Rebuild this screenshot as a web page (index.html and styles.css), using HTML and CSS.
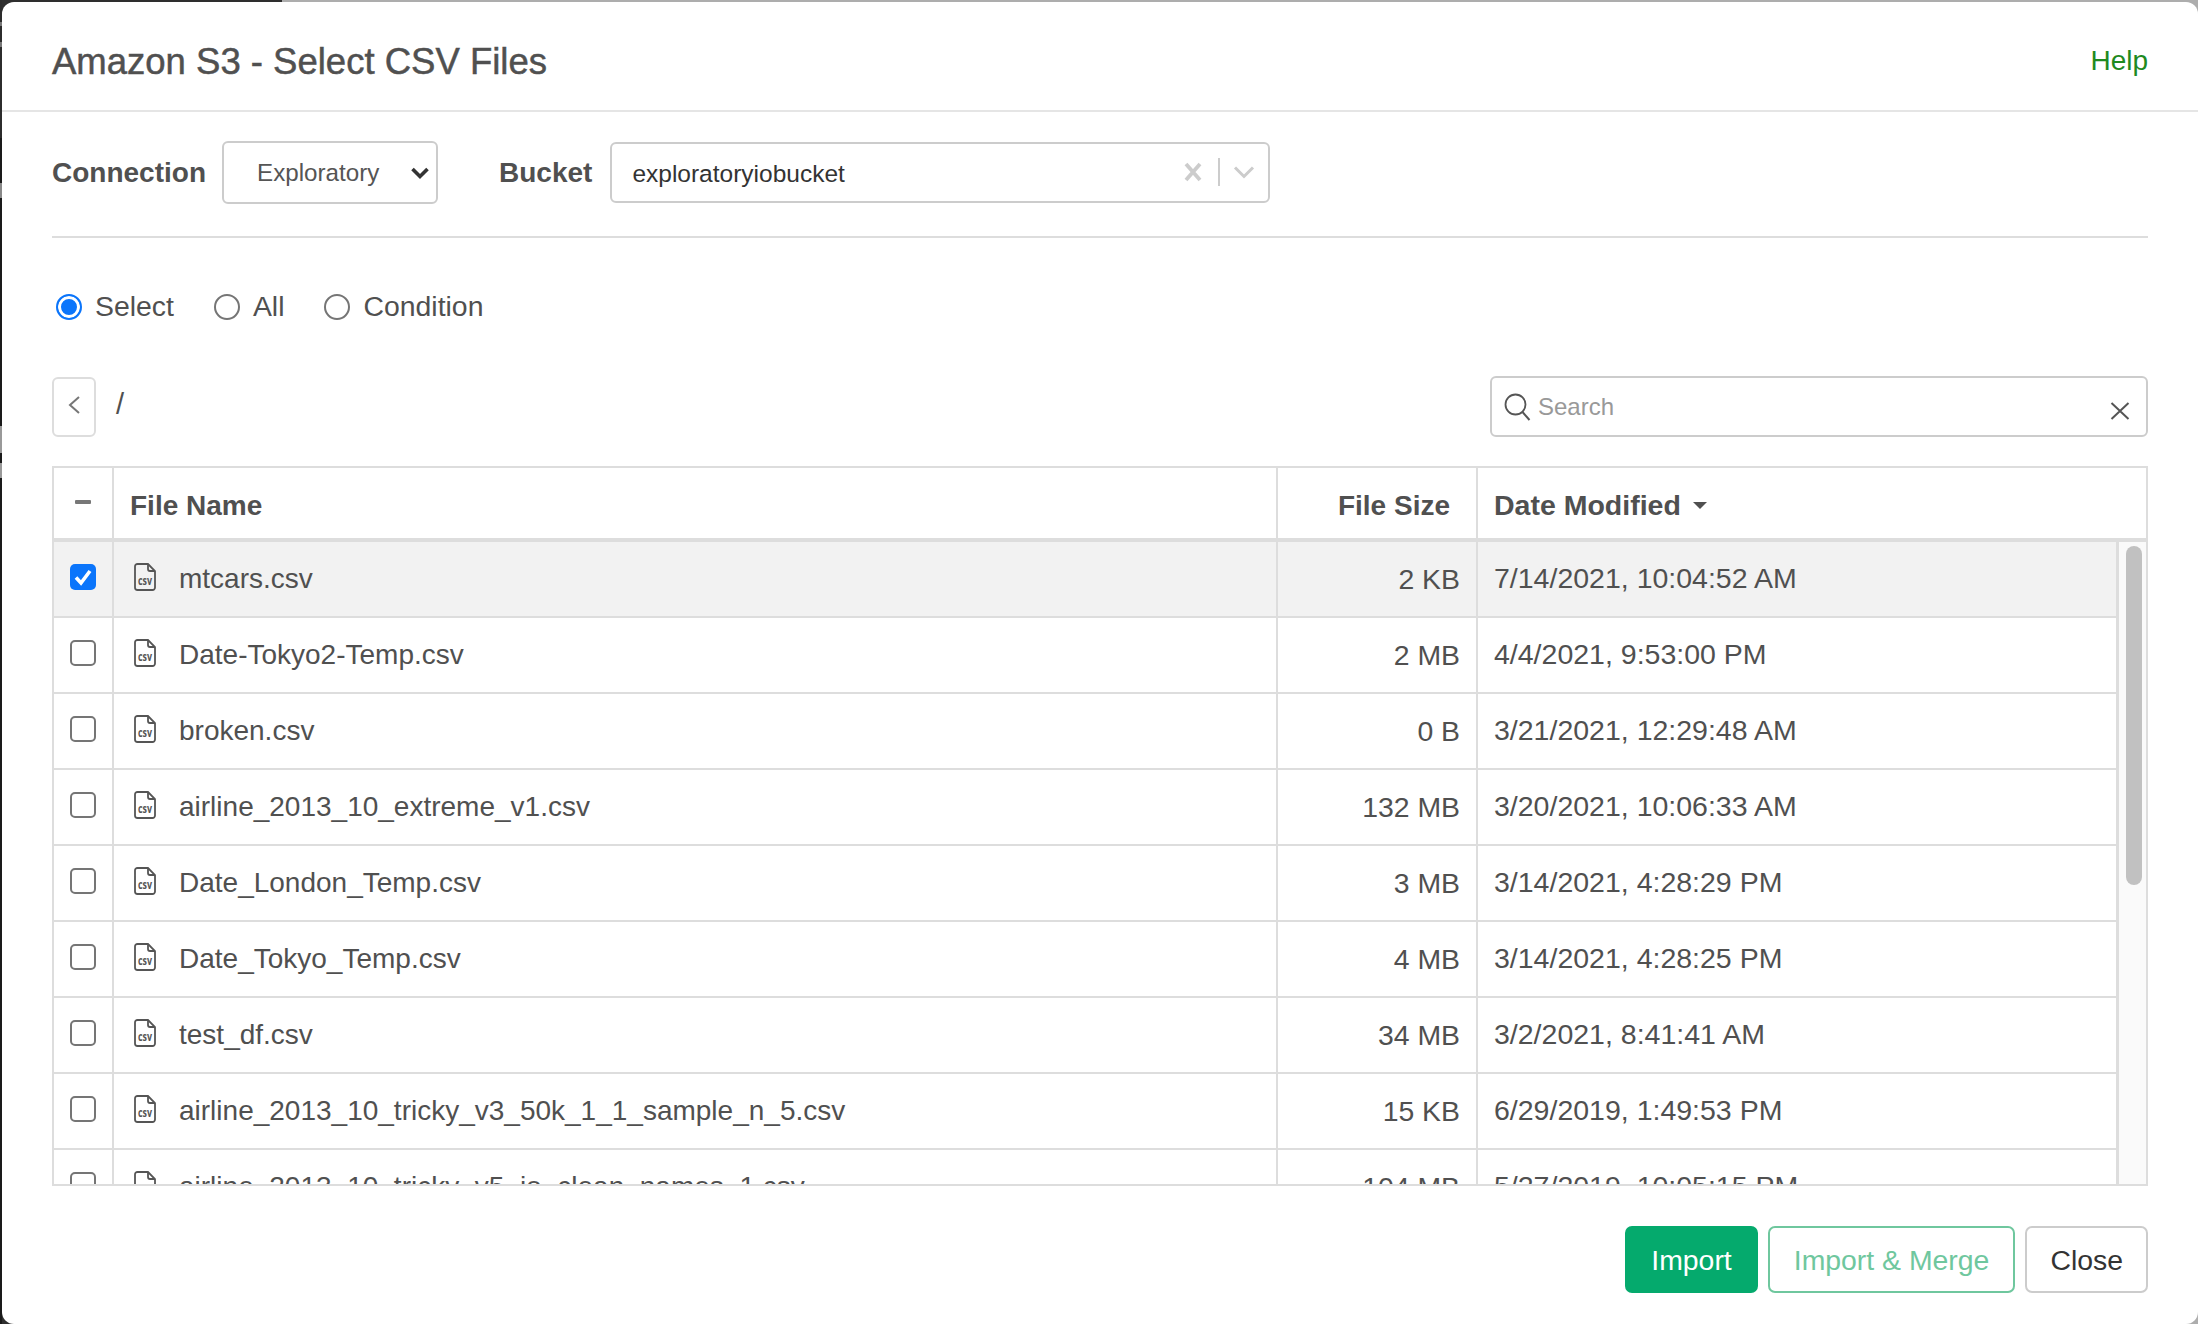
FILE: index.html
```html
<!DOCTYPE html>
<html lang="en">
<head>
    <meta charset="UTF-8" />
    <title>Amazon S3 - Select CSV Files</title>
    <link rel="stylesheet" href="styles.css">
</head>
<body>
    <svg class="defs" width="0" height="0">
        <symbol id="csv" viewBox="0 0 22 28">
            <path d="M3.500 1h10.500l7 7v16.500a2.500 2.500 0 0 1-2.500 2.500h-15a2.500 2.500 0 0 1-2.500-2.500v-21a2.500 2.500 0 0 1 2.500-2.500z" fill="none" stroke="#555" stroke-width="1.800"/>
            <path d="M14 1v5a2 2 0 0 0 2 2h5" fill="none" stroke="#555" stroke-width="1.800"/>
            <text x="4" y="21.500" textLength="14" lengthAdjust="spacingAndGlyphs" class="csv-text">csv</text>
        </symbol>
        <symbol id="tick" viewBox="0 0 26 26">
            <path d="M6 13.500l5 5.500 9-12" fill="none" stroke="#fff" stroke-width="3.600"/>
        </symbol>
    </svg>

    <div class="modal">
        <header class="head">
            <h1>Amazon S3 - Select CSV Files</h1>
            <a href="#" class="help">Help</a>
        </header>

        <div class="body">
            <div class="source">
                <label class="field-label">Connection</label>
                <div class="select">
                    <span>Exploratory</span>
                    <svg width="20" height="14" viewBox="0 0 20 14"><path d="M2.500 3L10 10.500 17.500 3" fill="none" stroke="#333" stroke-width="3.600"/></svg>
                </div>
                <label class="field-label bucket-label">Bucket</label>
                <div class="combo">
                    <span class="combo-value">exploratoryiobucket</span>
                    <svg class="combo-x" width="18" height="20" viewBox="0 0 18 20"><path d="M2 2l14 16M16 2L2 18" fill="none" stroke="#ccc" stroke-width="3.800"/></svg>
                    <i class="combo-sep"></i>
                    <svg class="combo-arrow" width="22" height="14" viewBox="0 0 22 14"><path d="M2 2.500l9 9 9-9" fill="none" stroke="#ccc" stroke-width="3"/></svg>
                </div>
            </div>

            <div class="modes">
                <label class="mode"><i class="radio on"></i>Select</label>
                <label class="mode"><i class="radio"></i>All</label>
                <label class="mode"><i class="radio"></i>Condition</label>
            </div>

            <div class="path-row">
                <a href="#" class="back"><svg width="14" height="20" viewBox="0 0 14 20"><path d="M12 2L3 10l9 8" fill="none" stroke="#777" stroke-width="2"/></svg></a>
                <span class="path">/</span>
                <div class="search">
                    <svg class="search-icon" width="30" height="30" viewBox="0 0 30 30"><circle cx="12.500" cy="12.500" r="10" fill="none" stroke="#555" stroke-width="1.800"/><path d="M19.500 20l7 8" fill="none" stroke="#555" stroke-width="2"/></svg>
                    <span class="search-text">Search</span>
                    <svg class="search-x" width="20" height="18" viewBox="0 0 20 18"><path d="M1.500 1l17 16M18.500 1L1.500 17" fill="none" stroke="#555" stroke-width="2"/></svg>
                </div>
            </div>

            <div class="files">
                <div class="row head-row">
                    <div class="c-check"><i class="minus"></i></div>
                    <div class="c-name">File Name</div>
                    <div class="c-size">File Size</div>
                    <div class="c-date">Date Modified <i class="caret"></i></div>
                </div>
                <div class="list">
                    <div class="rows">
                        <div class="row selected">
                            <div class="c-check"><i class="box on"><svg width="26" height="26"><use href="#tick"/></svg></i></div>
                            <div class="c-name"><svg class="file-icon"><use href="#csv"/></svg>mtcars.csv</div>
                            <div class="c-size">2 KB</div>
                            <div class="c-date">7/14/2021, 10:04:52 AM</div>
                        </div>
                        <div class="row">
                            <div class="c-check"><i class="box"></i></div>
                            <div class="c-name"><svg class="file-icon"><use href="#csv"/></svg>Date-Tokyo2-Temp.csv</div>
                            <div class="c-size">2 MB</div>
                            <div class="c-date">4/4/2021, 9:53:00 PM</div>
                        </div>
                        <div class="row">
                            <div class="c-check"><i class="box"></i></div>
                            <div class="c-name"><svg class="file-icon"><use href="#csv"/></svg>broken.csv</div>
                            <div class="c-size">0 B</div>
                            <div class="c-date">3/21/2021, 12:29:48 AM</div>
                        </div>
                        <div class="row">
                            <div class="c-check"><i class="box"></i></div>
                            <div class="c-name"><svg class="file-icon"><use href="#csv"/></svg>airline_2013_10_extreme_v1.csv</div>
                            <div class="c-size">132 MB</div>
                            <div class="c-date">3/20/2021, 10:06:33 AM</div>
                        </div>
                        <div class="row">
                            <div class="c-check"><i class="box"></i></div>
                            <div class="c-name"><svg class="file-icon"><use href="#csv"/></svg>Date_London_Temp.csv</div>
                            <div class="c-size">3 MB</div>
                            <div class="c-date">3/14/2021, 4:28:29 PM</div>
                        </div>
                        <div class="row">
                            <div class="c-check"><i class="box"></i></div>
                            <div class="c-name"><svg class="file-icon"><use href="#csv"/></svg>Date_Tokyo_Temp.csv</div>
                            <div class="c-size">4 MB</div>
                            <div class="c-date">3/14/2021, 4:28:25 PM</div>
                        </div>
                        <div class="row">
                            <div class="c-check"><i class="box"></i></div>
                            <div class="c-name"><svg class="file-icon"><use href="#csv"/></svg>test_df.csv</div>
                            <div class="c-size">34 MB</div>
                            <div class="c-date">3/2/2021, 8:41:41 AM</div>
                        </div>
                        <div class="row">
                            <div class="c-check"><i class="box"></i></div>
                            <div class="c-name"><svg class="file-icon"><use href="#csv"/></svg>airline_2013_10_tricky_v3_50k_1_1_sample_n_5.csv</div>
                            <div class="c-size">15 KB</div>
                            <div class="c-date">6/29/2019, 1:49:53 PM</div>
                        </div>
                        <div class="row">
                            <div class="c-check"><i class="box"></i></div>
                            <div class="c-name"><svg class="file-icon"><use href="#csv"/></svg>airline_2013_10_tricky_v5_io_clean_names_1.csv</div>
                            <div class="c-size">104 MB</div>
                            <div class="c-date">5/27/2019, 10:05:15 PM</div>
                        </div>
                    </div>
                    <div class="scrollbar"><i class="thumb"></i></div>
                </div>
            </div>

            <div class="actions">
                <a href="#" class="btn primary">Import</a>
                <a href="#" class="btn ghost">Import &amp; Merge</a>
                <a href="#" class="btn close">Close</a>
            </div>
        </div>
    </div>
</body>
</html>
```

FILE: styles.css
```css
*{
    box-sizing: border-box;
}
html,body{
    height: 100%;
}
body{
    margin: 0;
    overflow: hidden;
    /* page behind the dialog: a dark window on the left, grey on the right */
    background:
        linear-gradient(180deg, #2c2c2c 22px, #777 22px, #777 26px, #2c2c2c 26px, #2c2c2c 42px, #777 42px, #777 47px, #2c2c2c 47px, #2c2c2c 138px, #1a1a1a 138px, #1a1a1a 183px, #888 183px, #888 198px, #1a1a1a 198px, #1a1a1a 426px, #999 426px, #999 453px, #1a1a1a 453px, #1a1a1a 463px, #999 463px, #999 478px, #1a1a1a 478px) 0 0 / 2px 100% no-repeat,
        linear-gradient(90deg, #2e2e2e 282px, #adadad 282px);
    padding: 2px 0 0 2px;
    font-family: "Liberation Sans", Arial, sans-serif;
    color: #505050;
}
.defs{
    display: none;
}
.csv-text{
    font-family: "Open Sans", "Liberation Sans", sans-serif;
    font-size: 13px;
    font-weight: 700;
    fill: #555;
}
i{
    display: block;
    font-style: normal;
}
a{
    text-decoration: none;
}
.modal{
    width: 2196px;
    height: 1322px;
    background: #fff;
    border-radius: 12px;
}
.head{
    height: 110px;
    border-bottom: 2px solid #e5e5e5;
    padding: 10px 50px 0 50px;
    display: flex;
    align-items: center;
    justify-content: space-between;
}
h1{
    margin: 0;
    padding-top: 2px;
    font-size: 36.5px;
    font-weight: 400;
    -webkit-text-stroke: .5px #505050;
}
.help{
    font-size: 28px;
    color: #1f8a1f;
}
.body{
    padding: 29px 50px 0;
}
.source{
    height: 97px;
    padding-bottom: 33px;
    border-bottom: 2px solid #ddd;
    display: flex;
    align-items: center;
}
.field-label{
    padding-top: 2px;
    font-size: 28px;
    font-weight: 700;
}
.select{
    width: 216px;
    height: 63px;
    margin-left: 16px;
    border: 2px solid #ccc;
    border-radius: 6px;
    padding: 1px 6px 0 33px;
    display: flex;
    align-items: center;
    justify-content: space-between;
    font-size: 24.2px;
    color: #555;
}
.bucket-label{
    margin-left: 61px;
}
.combo{
    width: 660px;
    height: 61px;
    margin-left: 18px;
    border: 2px solid #ccc;
    border-radius: 6px;
    padding: 0 13px 0 20px;
    display: flex;
    align-items: center;
    font-size: 24.5px;
    color: #333;
}
.combo-value{
    flex: 1;
    padding-top: 3px;
}
.combo-sep{
    width: 2px;
    height: 28px;
    background: #ccc;
    margin: 0 13px 0 16px;
}
.modes{
    height: 67px;
    margin-top: 35px;
    display: flex;
    align-items: center;
    padding-left: 4px;
    font-size: 28.4px;
}
.mode{
    display: flex;
    align-items: center;
    margin-right: 40px;
}
.radio{
    width: 26px;
    height: 26px;
    border: 2px solid #757575;
    border-radius: 50%;
    margin-right: 13px;
}
.radio.on{
    border-color: #0b75fb;
    background: #0b75fb;
    box-shadow: inset 0 0 0 3px #fff;
}
.path-row{
    height: 61px;
    margin-top: 36px;
    display: flex;
    align-items: center;
}
.back{
    width: 44px;
    height: 60px;
    border: 2px solid #ddd;
    border-radius: 6px;
    display: flex;
    align-items: center;
    justify-content: center;
}
.back svg{
    margin-top: -4px;
}
.path{
    margin-left: 20px;
    margin-top: -4px;
    flex: 1;
    font-size: 29px;
}
.search{
    width: 658px;
    height: 61px;
    border: 2px solid #ccc;
    border-radius: 6px;
    padding: 0 16px 0 11px;
    display: flex;
    align-items: center;
}
.search-text{
    flex: 1;
    margin-left: 5px;
    font-size: 24px;
    color: #999;
}
.search-x{
    margin-top: 8px;
}
.files{
    height: 720px;
    margin-top: 29px;
    border: 2px solid #ddd;
    font-size: 28px;
}
.row{
    height: 76px;
    display: flex;
    align-items: stretch;
    border-bottom: 2px solid #ddd;
}
.row > div{
    display: flex;
    align-items: center;
    white-space: nowrap;
}
.c-check{
    width: 60px;
    justify-content: center;
    border-right: 2px solid #ddd;
    flex: none;
}
.c-name{
    width: 1164px;
    flex: none;
    padding-left: 17px;
    border-right: 2px solid #ddd;
}
.c-size{
    width: 200px;
    flex: none;
    justify-content: flex-end;
    padding-right: 16px;
    border-right: 2px solid #ddd;
    font-size: 28.4px;
}
.c-date{
    flex: 1;
    padding: 0 0 2px 16px;
    font-size: 28.5px;
}
.head-row{
    height: 74px;
    border-bottom-width: 4px;
    font-weight: 700;
}
.head-row .c-name,
.head-row .c-size,
.head-row .c-date{
    padding-top: 5px;
    padding-bottom: 0;
}
.head-row .c-name{
    padding-left: 16px;
}
.head-row .c-size{
    padding-right: 26px;
    font-size: 28px;
}
.minus{
    width: 16px;
    height: 4px;
    background: #777;
    border-radius: 1px;
    margin-top: -2px;
}
.caret{
    display: inline-block;
    margin-left: 12px;
    border: 7px solid transparent;
    border-top-color: #505050;
    border-bottom-width: 0;
}
.list{
    height: 642px;
    overflow: hidden;
    display: flex;
}
.rows{
    flex: 1;
    min-width: 0;
    border-right: 3px solid #ddd;
    overflow: hidden;
}
.scrollbar{
    width: 27px;
    flex: none;
    background: #fafafa;
    padding: 4px 4px 0 7px;
}
.thumb{
    height: 339px;
    background: #c1c1c1;
    border-radius: 8px;
}
.selected{
    background: #f2f2f2;
}
.box{
    width: 26px;
    height: 26px;
    border: 2px solid #757575;
    border-radius: 5px;
    margin-top: -5px;
}
.box.on{
    border: 0;
    background: #0b75fb;
}
.box svg{
    display: block;
}
.file-icon{
    width: 22px;
    height: 28px;
    margin: -4px 23px 0 3px;
    flex: none;
}
.actions{
    margin-top: 40px;
    display: flex;
    justify-content: flex-end;
    gap: 10px;
}
.btn{
    height: 67px;
    padding: 1px 24px 0;
    border: 2px solid #ccc;
    border-radius: 7px;
    display: flex;
    align-items: center;
    font-size: 28.4px;
    color: #333;
}
.close{
    padding: 1px 23px 0;
}
.primary{
    background: #05aa6d;
    border-color: #05aa6d;
    color: #fff;
}
.ghost{
    border-color: #6fc79e;
    color: #6fc79e;
}
```
